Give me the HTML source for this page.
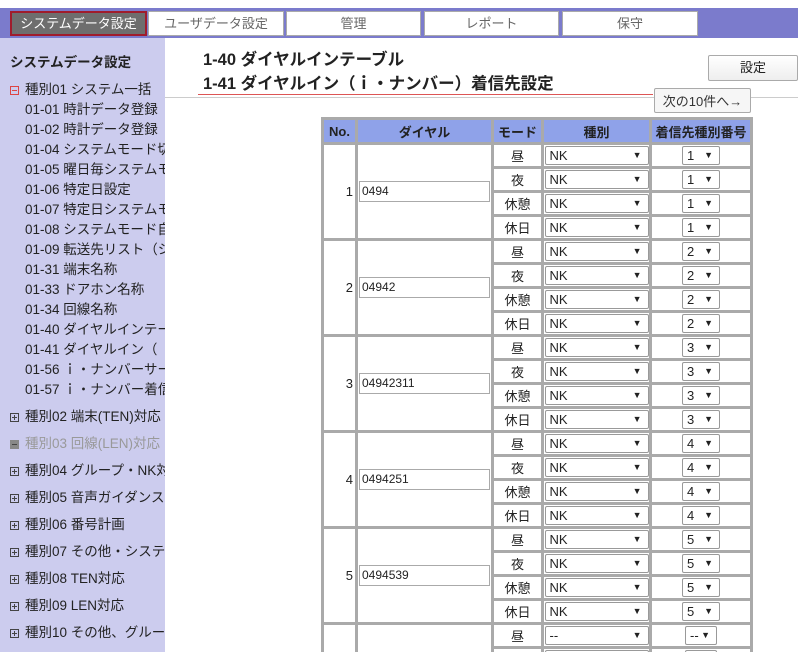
<!DOCTYPE html>
<html><head><meta charset="utf-8"><style>
*{margin:0;padding:0;box-sizing:border-box}
html,body{width:798px;height:652px;overflow:hidden}
body{background:#fff;font-family:"Liberation Sans","Noto Sans CJK JP",sans-serif;font-size:13px;color:#222;position:relative}
.bar{position:absolute;left:0;top:8px;width:798px;height:30px;background:#7b7bcc}
.tab{position:absolute;top:11px;height:25px;background:#fff;border:1px solid #aaa;text-align:center;line-height:23px;color:#666;font-size:13px}
.tab.on{background:#6e6e6e;color:#fff;border:2px solid #a01c2c;line-height:21px}
.side{position:absolute;left:0;top:38px;width:165px;height:614px;background:#ccccee;overflow:hidden;white-space:nowrap;font-size:13.5px}
.side div{position:absolute;left:0}
.side .sub{left:25px}
.pl{display:inline-block;width:9px;height:9px;border:1px solid #444;margin:0 6px 0 10px;position:relative;vertical-align:-1px}
.pl:before{content:"";position:absolute;left:1px;right:1px;top:3px;height:1px;background:#444}
.pl.p:after{content:"";position:absolute;top:1px;bottom:1px;left:3px;width:1px;background:#444}
.pl.m{border-color:#d44}.pl.m:before{background:#d44}
.t{position:absolute;left:203px;font-size:16.5px;font-weight:bold;color:#222}
table{position:absolute;left:321px;top:117px;border-collapse:separate;border-spacing:3px;background:#aaa;table-layout:fixed}
td,th{background:#fff;height:21px;padding:0;font-size:13px;text-align:center}
th{background:#8fa2e9;height:22px;font-weight:bold}
td.no{text-align:right;padding-right:2px}
td.d{text-align:left;padding-left:1px}
.sel{display:inline-block;border:1px solid #999;border-radius:2px;height:19px;line-height:17px;text-align:left;padding-left:4px;position:relative;vertical-align:middle}
.sel:after{content:"▼";position:absolute;right:6px;top:0;font-size:9px}
.a{width:104px}.b{width:38px}
.inp{display:inline-block;width:131px;height:21px;border:1px solid #aaa;text-align:left;padding-left:2px;line-height:19px;font-size:12px;vertical-align:middle}
</style></head><body>
<div class="bar"></div>
<div class="tab on" style="left:10px;width:137px">システムデータ設定</div>
<div class="tab" style="left:148px;width:136px">ユーザデータ設定</div>
<div class="tab" style="left:286px;width:135px">管理</div>
<div class="tab" style="left:424px;width:135px">レポート</div>
<div class="tab" style="left:562px;width:136px">保守</div>
<div class="side">
<div style="top:13px;left:10px;font-weight:bold">システムデータ設定</div>
<div style="top:40px"><span class="pl m"></span>種別01 システム一括</div>
<div class="sub" style="top:60px">01-01 時計データ登録</div>
<div class="sub" style="top:80px">01-02 時計データ登録</div>
<div class="sub" style="top:100px">01-04 システムモード切替</div>
<div class="sub" style="top:120px">01-05 曜日毎システムモード</div>
<div class="sub" style="top:140px">01-06 特定日設定</div>
<div class="sub" style="top:160px">01-07 特定日システムモード</div>
<div class="sub" style="top:180px">01-08 システムモード自動</div>
<div class="sub" style="top:200px">01-09 転送先リスト（システム</div>
<div class="sub" style="top:220px">01-31 端末名称</div>
<div class="sub" style="top:240px">01-33 ドアホン名称</div>
<div class="sub" style="top:260px">01-34 回線名称</div>
<div class="sub" style="top:280px">01-40 ダイヤルインテーブル</div>
<div class="sub" style="top:300px">01-41 ダイヤルイン（</div>
<div class="sub" style="top:320px">01-56 ｉ・ナンバーサービス</div>
<div class="sub" style="top:340px">01-57 ｉ・ナンバー着信先</div>
<div style="top:367px"><span class="pl p"></span>種別02 端末(TEN)対応</div>
<div style="top:394px;color:#999"><span class="pl" style="background:#888;border-color:#888"></span>種別03 回線(LEN)対応</div>
<div style="top:421px"><span class="pl p"></span>種別04 グループ・NK対応</div>
<div style="top:448px"><span class="pl p"></span>種別05 音声ガイダンス</div>
<div style="top:475px"><span class="pl p"></span>種別06 番号計画</div>
<div style="top:502px"><span class="pl p"></span>種別07 その他・システム</div>
<div style="top:529px"><span class="pl p"></span>種別08 TEN対応</div>
<div style="top:556px"><span class="pl p"></span>種別09 LEN対応</div>
<div style="top:583px"><span class="pl p"></span>種別10 その他、グループ</div>
</div>
<div class="t" style="top:46px">1-40 ダイヤルインテーブル</div>
<div class="t" style="top:70px">1-41 ダイヤルイン（ｉ・ナンバー）着信先設定</div>
<div style="position:absolute;left:198px;top:94px;width:455px;height:1px;background:#d55"></div>
<div style="position:absolute;left:165px;top:97px;width:633px;height:1px;background:#ccc"></div>
<div style="position:absolute;left:708px;top:55px;width:90px;height:26px;border:1px solid #aaa;border-radius:2px;background:linear-gradient(#fff,#eee);text-align:center;line-height:24px">設定</div>
<div style="position:absolute;left:654px;top:88px;width:97px;height:25px;border:1px solid #aaa;border-radius:2px;background:#f6f6f6;text-align:center;line-height:26px;overflow:hidden;color:#333">次の10件へ→</div>
<table>
<colgroup><col style="width:31px"><col style="width:133px"><col style="width:47px"><col style="width:105px"><col style="width:98px"></colgroup>
<tr><th>No.</th><th>ダイヤル</th><th>モード</th><th>種別</th><th>着信先種別番号</th></tr>
<tr><td rowspan="4" class="no">1</td><td rowspan="4" class="d"><span class="inp">0494</span></td><td>昼</td><td><span class="sel a">NK</span></td><td><span class="sel b">1</span></td></tr>
<tr><td>夜</td><td><span class="sel a">NK</span></td><td><span class="sel b">1</span></td></tr>
<tr><td>休憩</td><td><span class="sel a">NK</span></td><td><span class="sel b">1</span></td></tr>
<tr><td>休日</td><td><span class="sel a">NK</span></td><td><span class="sel b">1</span></td></tr>
<tr><td rowspan="4" class="no">2</td><td rowspan="4" class="d"><span class="inp">04942</span></td><td>昼</td><td><span class="sel a">NK</span></td><td><span class="sel b">2</span></td></tr>
<tr><td>夜</td><td><span class="sel a">NK</span></td><td><span class="sel b">2</span></td></tr>
<tr><td>休憩</td><td><span class="sel a">NK</span></td><td><span class="sel b">2</span></td></tr>
<tr><td>休日</td><td><span class="sel a">NK</span></td><td><span class="sel b">2</span></td></tr>
<tr><td rowspan="4" class="no">3</td><td rowspan="4" class="d"><span class="inp">04942311</span></td><td>昼</td><td><span class="sel a">NK</span></td><td><span class="sel b">3</span></td></tr>
<tr><td>夜</td><td><span class="sel a">NK</span></td><td><span class="sel b">3</span></td></tr>
<tr><td>休憩</td><td><span class="sel a">NK</span></td><td><span class="sel b">3</span></td></tr>
<tr><td>休日</td><td><span class="sel a">NK</span></td><td><span class="sel b">3</span></td></tr>
<tr><td rowspan="4" class="no">4</td><td rowspan="4" class="d"><span class="inp">0494251</span></td><td>昼</td><td><span class="sel a">NK</span></td><td><span class="sel b">4</span></td></tr>
<tr><td>夜</td><td><span class="sel a">NK</span></td><td><span class="sel b">4</span></td></tr>
<tr><td>休憩</td><td><span class="sel a">NK</span></td><td><span class="sel b">4</span></td></tr>
<tr><td>休日</td><td><span class="sel a">NK</span></td><td><span class="sel b">4</span></td></tr>
<tr><td rowspan="4" class="no">5</td><td rowspan="4" class="d"><span class="inp">0494539</span></td><td>昼</td><td><span class="sel a">NK</span></td><td><span class="sel b">5</span></td></tr>
<tr><td>夜</td><td><span class="sel a">NK</span></td><td><span class="sel b">5</span></td></tr>
<tr><td>休憩</td><td><span class="sel a">NK</span></td><td><span class="sel b">5</span></td></tr>
<tr><td>休日</td><td><span class="sel a">NK</span></td><td><span class="sel b">5</span></td></tr>
<tr><td rowspan="4" class="no"></td><td rowspan="4" class="d"></td><td>昼</td><td><span class="sel a">--</span></td><td><span class="sel" style="width:32px">--</span></td></tr>
<tr><td>夜</td><td><span class="sel a">--</span></td><td><span class="sel" style="width:32px">--</span></td></tr>
</table>
</body></html>
